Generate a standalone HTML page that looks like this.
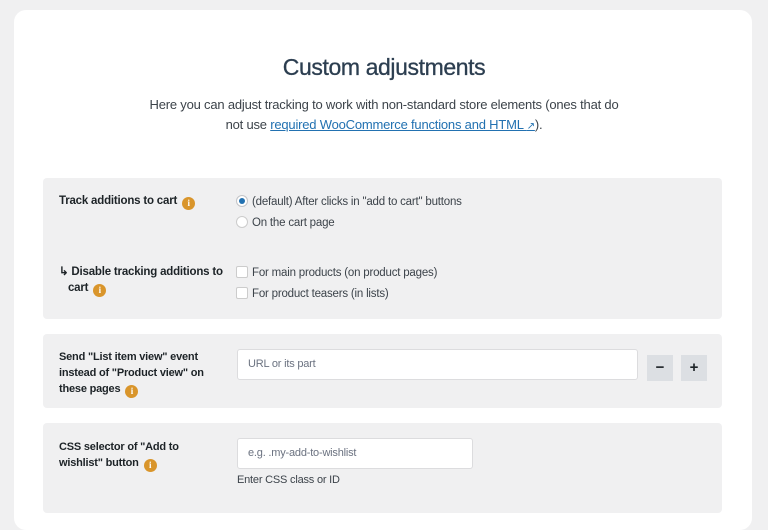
<!DOCTYPE html>
<html><head><style>
*{box-sizing:border-box;margin:0;padding:0}
body{width:768px;height:486px;overflow:hidden;background:#f0f0f1;font-family:"Liberation Sans",sans-serif;color:#3c434a;position:relative}
.card{position:absolute;left:14px;top:10px;width:738px;height:520px;background:#fff;border-radius:12px}
h1{position:absolute;left:0;width:768px;top:54px;text-align:center;font-size:23px;font-weight:normal;color:#2c3e50;letter-spacing:-0.4px;-webkit-text-stroke:0.3px #2c3e50}
.p{position:absolute;left:0;width:768px;top:95px;text-align:center;font-size:13px;line-height:20px;letter-spacing:-0.2px;color:#3c434a}
.p a{color:#2271b1;text-decoration:underline}
.sec{position:absolute;left:43px;width:679px;background:#f0f0f1;border-radius:4px}
.lbl{position:absolute;font-size:11.5px;font-weight:bold;color:#1d2327;line-height:16px;letter-spacing:-0.2px}
.i{display:inline-block;width:13px;height:13px;border-radius:50%;background:#d9952b;color:#fff;font-size:9px;text-align:center;line-height:13px;font-weight:bold;vertical-align:-2px;margin-left:5px;font-family:"Liberation Serif",serif}
.opt{position:absolute;font-size:11.5px;color:#3c434a;line-height:14px;letter-spacing:-0.2px}
.rb,.cb{position:absolute;width:12px;height:12px;background:#fff;border:1px solid #ccc}
.rb{border-radius:50%}
.cb{border-radius:2px}
.inp{position:absolute;background:#fff;border:1px solid #dcdcde;border-radius:3px;font-size:11px;color:#6b7280;padding-left:10px;letter-spacing:-0.2px}
.btn{position:absolute;width:26px;height:26px;background:#dcdfe3;color:#1d2327;font-size:15px;text-align:center;line-height:25px;font-weight:bold}
</style></head><body>
<div class="card"></div>
<h1>Custom adjustments</h1>
<div class="p">Here you can adjust tracking to work with non-standard store elements (ones that do<br>not use <a>required WooCommerce functions and HTML <span style="font-size:10px">&#x2197;</span></a>).</div>

<div class="sec" style="top:178px;height:141px"></div>
<div class="lbl" style="left:59px;top:193px">Track additions to cart<span class="i">i</span></div>
<div class="rb" style="left:236px;top:195px;border-color:#c3c4c7"><div style="position:absolute;left:2px;top:2px;width:6px;height:6px;border-radius:50%;background:#2271b1"></div></div>
<div class="opt" style="left:252px;top:195px">(default) After clicks in "add to cart" buttons</div>
<div class="rb" style="left:236px;top:216px"></div>
<div class="opt" style="left:252px;top:216px">On the cart page</div>
<div class="lbl" style="left:59px;top:264px;width:170px">&#8627; Disable tracking additions to<br>&nbsp;&nbsp;&nbsp;cart<span class="i">i</span></div>
<div class="cb" style="left:236px;top:266px"></div>
<div class="opt" style="left:252px;top:266px">For main products (on product pages)</div>
<div class="cb" style="left:236px;top:287px"></div>
<div class="opt" style="left:252px;top:287px">For product teasers (in lists)</div>

<div class="sec" style="top:334px;height:74px"></div>
<div class="lbl" style="left:59px;top:349px;width:160px;font-size:11px">Send "List item view" event<br>instead of "Product view" on<br>these pages<span class="i">i</span></div>
<div class="inp" style="left:237px;top:349px;width:401px;height:31px;line-height:29px">URL or its part</div>
<div class="btn" style="left:647px;top:355px">&minus;</div>
<div class="btn" style="left:681px;top:355px">+</div>

<div class="sec" style="top:423px;height:90px"></div>
<div class="lbl" style="left:59px;top:439px;width:160px;font-size:11px">CSS selector of "Add to<br>wishlist" button<span class="i">i</span></div>
<div class="inp" style="left:237px;top:438px;width:236px;height:31px;line-height:29px">e.g. .my-add-to-wishlist</div>
<div class="opt" style="left:237px;top:473px;font-size:11px">Enter CSS class or ID</div>
</body></html>
